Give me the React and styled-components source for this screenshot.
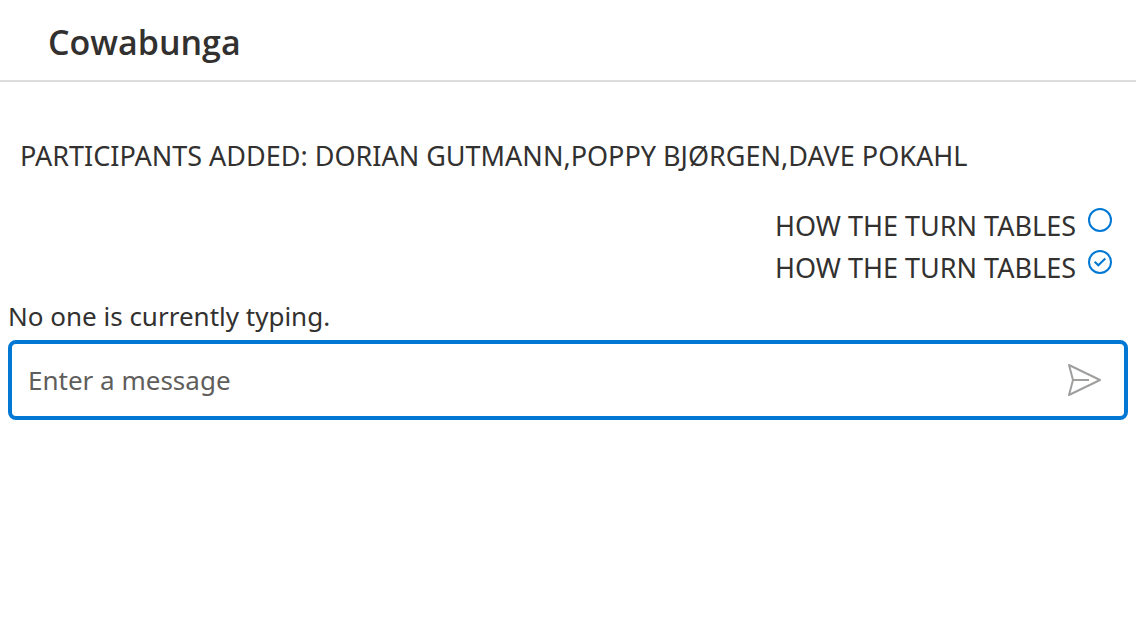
import React from "react";
import styled, { createGlobalStyle } from "styled-components";

const GlobalStyle = createGlobalStyle`
  *, *::before, *::after { box-sizing: border-box; }
  body {
    margin: 0;
    background: #ffffff;
    color: #323130;
    font-family: "Noto Sans", "Open Sans", sans-serif;
  }
`;

const Header = styled.header`
  padding: 18px 48px 14px;
  border-bottom: 2px solid #dddddd;
`;

const Title = styled.h1`
  margin: 0;
  font: 600 34px/48px "Open Sans", "Noto Sans", sans-serif;
`;

const Thread = styled.main`
  padding: 53px 8px 0;
`;

const SystemMessage = styled.p`
  margin: 0;
  padding: 0 12px;
  font-size: 27px;
  line-height: 42px;
`;

const MessageList = styled.ul`
  list-style: none;
  margin: 0;
  padding: 28px 16px 0 0;
`;

const Message = styled.li`
  display: flex;
  justify-content: flex-end;
  align-items: flex-start;
  gap: 12px;
  font-size: 27px;
  line-height: 42px;
`;

const StatusIcon = styled.svg`
  flex: none;
  width: 24px;
  height: 24px;
  margin-top: 3px;
  fill: none;
  stroke: #0078d4;
  stroke-width: 2;
`;

const Typing = styled.p`
  margin: 0;
  padding-top: 6px;
  font-size: 26px;
  line-height: 42px;
`;

const Composer = styled.form`
  display: flex;
  align-items: center;
  height: 80px;
  margin-top: 3px;
  padding: 0 22px 0 16px;
  border: 4px solid #0078d4;
  border-radius: 8px;
`;

const MessageInput = styled.input`
  flex: 1;
  min-width: 0;
  padding: 0;
  border: 0;
  outline: 0;
  background: transparent;
  color: inherit;
  font: 26px/42px "Noto Sans", "Open Sans", sans-serif;
  &::placeholder { color: #605e5c; opacity: 1; }
`;

const SendButton = styled.button`
  display: flex;
  padding: 0;
  border: 0;
  background: none;
  color: #a19f9d;
`;

const Status = ({ sent }) => (
  <StatusIcon viewBox="0 0 24 24" role="img" aria-label={sent ? "Sent" : "Sending"}>
    <circle cx="12" cy="12" r="11" />
    {sent && <path d="M6.7 11.7L10.3 15.3L17.3 8.5" />}
  </StatusIcon>
);

const messages = [
  { id: 1, text: "HOW THE TURN TABLES", sent: false },
  { id: 2, text: "HOW THE TURN TABLES", sent: true },
];

export default function App() {
  return (
    <>
      <GlobalStyle />
      <Header>
        <Title>Cowabunga</Title>
      </Header>
      <Thread>
        <SystemMessage>PARTICIPANTS ADDED: DORIAN GUTMANN,POPPY BJØRGEN,DAVE POKAHL</SystemMessage>
        <MessageList>
          {messages.map((m) => (
            <Message key={m.id}>
              <span>{m.text}</span>
              <Status sent={m.sent} />
            </Message>
          ))}
        </MessageList>
        <Typing>No one is currently typing.</Typing>
        <Composer onSubmit={(e) => e.preventDefault()}>
          <MessageInput type="text" aria-label="Enter a message" placeholder="Enter a message" />
          <SendButton type="submit" aria-label="Send message">
            <svg width="36" height="36" viewBox="0 0 36 36" fill="none" stroke="currentColor" strokeWidth="2" strokeLinejoin="round">
              <path d="M3 3L34 18L3 33L7 18ZM7 18H23" />
            </svg>
          </SendButton>
        </Composer>
      </Thread>
    </>
  );
}
